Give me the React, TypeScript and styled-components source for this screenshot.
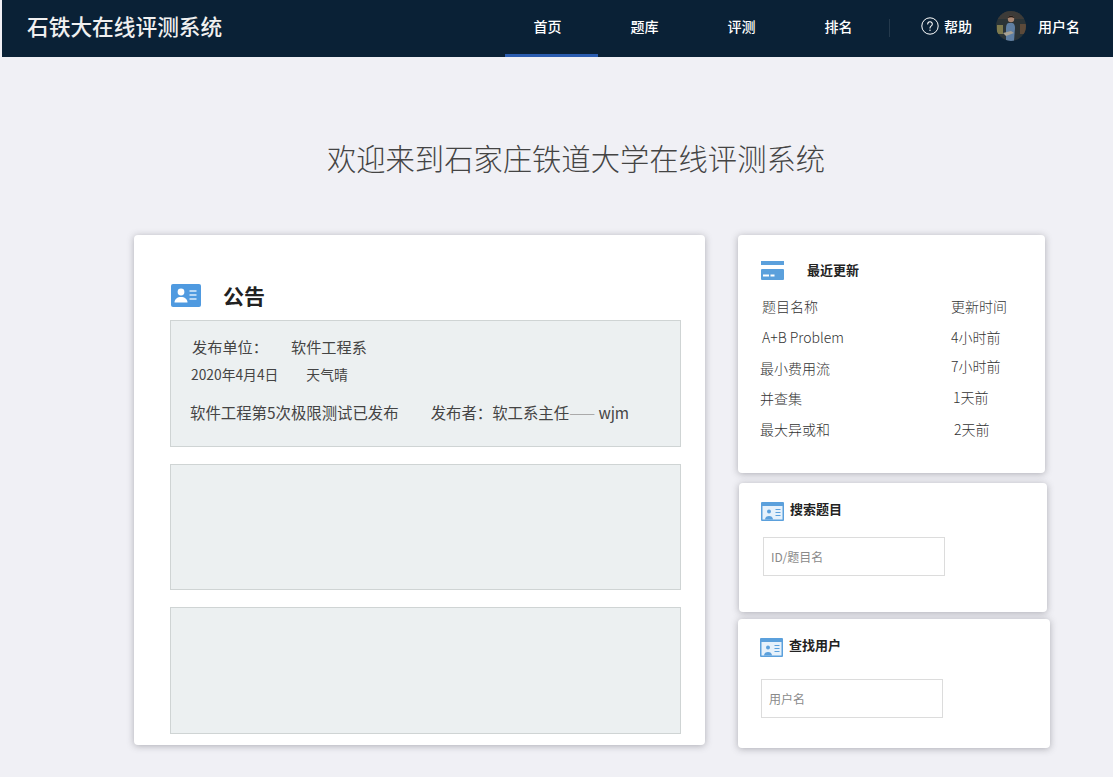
import * as React from 'react'
import styled, { createGlobalStyle } from 'styled-components'

const GlobalStyle = createGlobalStyle`
  html, body {
    margin: 0;
    padding: 0;
    background: #f0f0f5;
    font-family: 'Noto Sans CJK SC', 'Noto Sans', sans-serif;
    color: #333;
  }
  * {
    box-sizing: border-box;
  }
`

const Page = styled.div`
  width: 1113px;
  height: 777px;
  overflow: hidden;
`

// header
const Header = styled.header`
  display: flex;
  align-items: center;
  height: 57px;
  margin-left: 2px;
  background: #0a2136;
  color: #fff;
  white-space: nowrap;
  & > * {
    flex-shrink: 0;
  }
`

const Brand = styled.div`
  width: 496px;
  padding-left: 25px;
  font-size: 21.7px;
  line-height: 52px;
  height: 57px;
  font-weight: 500;
  color: #f0f0f0;
`

const NavList = styled.nav`
  display: flex;
  gap: 4px;
  margin-left: 7px;
`

const NavItem = styled.a<{ $active?: boolean }>`
  width: 93px;
  height: 57px;
  padding-right: 8px;
  line-height: 52px;
  text-align: center;
  font-size: 14px;
  font-weight: 500;
  color: #fff;
  border-bottom: 3px solid ${({ $active }) => ($active ? '#2a5cb0' : 'transparent')};
`

const Divider = styled.span`
  width: 1px;
  height: 18px;
  margin-bottom: 2px;
  background: #24394c;
`

const HelpLink = styled.a`
  display: flex;
  align-items: center;
  gap: 5px;
  margin: 0 0 5px 31px;
  font-size: 14px;
  font-weight: 500;
  color: #fff;
`

const UserLink = styled.a`
  display: flex;
  align-items: center;
  gap: 12px;
  margin: 0 0 5px 24px;
  font-size: 14px;
  font-weight: 500;
  color: #fff;
`

const Avatar = styled.svg`
  width: 30px;
  height: 30px;
  display: block;
`

// welcome
const Welcome = styled.h1`
  margin: 0;
  padding: 79px 0 0 39px;
  height: 178px;
  text-align: center;
  font-size: 29.3px;
  line-height: 43px;
  font-weight: 300;
  color: #444;
`

const Content = styled.main`
  display: flex;
  align-items: flex-start;
  padding-left: 134px;
`

const Card = styled.section`
  background: #fff;
  border-radius: 4px;
  box-shadow: 0 1px 7px rgba(80, 80, 90, 0.42);
`

const NoticeCard = styled(Card)`
  display: flex;
  flex-direction: column;
  width: 571px;
  height: 510px;
  padding: 45px 24px 11px 36px;
`

const NoticeTitle = styled.div`
  display: flex;
  align-items: center;
  gap: 22px;
  height: 30px;
  margin: 0 0 10px 1px;
  font-size: 21px;
  font-weight: 700;
  color: #222;
`

const NoticeBox = styled.div`
  height: 127px;
  margin-bottom: 17px;
  background: #ecf0f1;
  border: 1px solid #cfd4d4;
  color: #444;
  &:last-child {
    margin-bottom: 0;
  }
`

const NoticeLine = styled.div<{ $top: number; $left: number; $size: number }>`
  display: flex;
  margin: ${({ $top }) => $top}px 0 0 ${({ $left }) => $left}px;
  font-size: ${({ $size }) => $size}px;
  line-height: 20px;
  white-space: nowrap;
`

const Gap = styled.span<{ $width: number }>`
  display: inline-block;
  width: ${({ $width }) => $width}px;
`

const Publisher = styled.span`
  font-size: 15.4px;
`

const Dash = styled.span`
  color: #aaa;
  letter-spacing: 2.500px;
  margin-right: 1px;
`

const SideColumn = styled.div`
  display: flex;
  flex-direction: column;
  margin-left: 33px;
`

const UpdateCard = styled(Card)`
  width: 307px;
  height: 238px;
  padding: 24px 0 0 23px;
`

const SideHead = styled.div<{ $gap: number }>`
  display: flex;
  align-items: center;
  gap: ${({ $gap }) => $gap}px;
  height: 22px;
  font-size: 13px;
  font-weight: 700;
  color: #222;
`

const SideTitle = styled.span`
  margin-bottom: 2px;
`

const UpdateRows = styled.div`
  margin: 10px 0 0 -1px;
  font-size: 14px;
  font-weight: 300;
  color: #333;
`

const UpdateRow = styled.div`
  display: flex;
  height: 30.75px;
  line-height: 31px;
`

const NameCell = styled.span<{ $left: number }>`
  width: 191px;
  padding-left: ${({ $left }) => $left}px;
  white-space: nowrap;
`

const TimeCell = styled.span<{ $left: number; $top: number }>`
  padding-left: ${({ $left }) => $left}px;
  margin-top: ${({ $top }) => $top}px;
  white-space: nowrap;
`

const SearchCard = styled(Card)<{ $width: number; $height: number; $top: number; $left: number }>`
  width: ${({ $width }) => $width}px;
  height: ${({ $height }) => $height}px;
  margin-top: ${({ $top }) => $top}px;
  margin-left: ${({ $left }) => $left}px;
  padding: 15px 0 0 22px;
`

const SearchInput = styled.input<{ $width: number; $top: number; $left: number }>`
  display: block;
  width: ${({ $width }) => $width}px;
  height: 39px;
  margin-top: ${({ $top }) => $top}px;
  margin-left: ${({ $left }) => $left}px;
  padding: 0 7px;
  background: #fff;
  border: 1px solid #dcdcdc;
  outline: none;
  font-family: inherit;
  font-size: 12px;
  &::placeholder {
    color: #8a8a8a;
    opacity: 1;
  }
`

const ContactLineSvg = styled.svg`
  margin-top: 4px;
`

const HelpIcon = () => (
  <svg width="18" height="18" viewBox="0 0 18 18" fill="none">
    <circle cx="9" cy="9" r="8.200" stroke="#fff" strokeWidth="1" />
    <path d="M6.700 7a2.300 2.300 0 1 1 3.600 1.900c-.9.6-1.300 1-1.300 2.100" stroke="#fff" strokeWidth="1.100" strokeLinecap="round" />
    <circle cx="9" cy="13.300" r=".7" fill="#fff" />
  </svg>
)

const UserAvatar = () => (
  <Avatar viewBox="0 0 30 30">
    <defs>
      <clipPath id="avatar-clip">
        <circle cx="15" cy="15" r="15" />
      </clipPath>
    </defs>
    <g clipPath="url(#avatar-clip)">
      <rect width="30" height="30" fill="#2b3437" />
      <rect x="0" y="0" width="30" height="8" fill="#3d3b38" />
      <rect x="1" y="14" width="6" height="9" fill="#7d7a4e" />
      <rect x="24" y="13" width="6" height="10" fill="#5c4a3a" />
      <path d="M10 30V17c0-3 1-5 3-5h3c2 0 3 2 3 5l-1 13z" fill="#5f7fa3" />
      <circle cx="15" cy="8" r="3.200" fill="#a98672" />
      <path d="M11.800 7c.3-3 6-3 6.500 0-2-1-4.500-1-6.500 0z" fill="#221a16" />
      <path d="M7 22l8-2 3 2-8 3z" fill="#a8a294" />
    </g>
  </Avatar>
)

const ContactSolidIcon = () => (
  <svg width="30" height="23" viewBox="0 0 30 23">
    <rect width="30" height="23" rx="2" fill="#4f9ae0" />
    <circle cx="10" cy="8" r="3.400" fill="#fff" />
    <path d="M3.500 18.500c0-3.500 3-5.500 6.500-5.500s6.500 2 6.500 5.500z" fill="#fff" />
    <path d="M18.500 7h7M18.500 11h7M18.500 15h7" stroke="#dcecfa" strokeWidth="1.600" />
  </svg>
)

const BankCardIcon = () => (
  <svg width="23" height="19" viewBox="0 0 23 19">
    <rect y="0" width="23" height="4" fill="#5ba0dc" />
    <rect y="8" width="23" height="11" rx="1" fill="#5ba0dc" />
    <path d="M2 14.500h6M9.500 14.500h4" stroke="#fff" strokeWidth="2" />
  </svg>
)

const ContactLineIcon = () => (
  <ContactLineSvg width="23" height="19" viewBox="0 0 23 19">
    <rect width="23" height="19" rx="1" fill="#5ba0dc" />
    <rect x="1.500" y="4" width="20" height="13.500" fill="#e6f1fb" />
    <circle cx="8" cy="9.500" r="2" fill="#5ba0dc" />
    <path d="M4 17.500c0-2.500 2-3.500 4-3.500s4 1 4 3.500z" fill="#5ba0dc" />
    <path d="M14.500 7.500h5M14.500 10.500h5M14.500 13.500h5" stroke="#5ba0dc" strokeWidth="1" fill="none" />
  </ContactLineSvg>
)

const navigation = ['首页', '题库', '评测', '排名']

const updates = [
  { name: '题目名称', time: '更新时间', nameLeft: 2, timeLeft: 0, timeTop: 0 },
  { name: 'A+B Problem', time: '4小时前', nameLeft: 2, timeLeft: 0, timeTop: 0 },
  { name: '最小费用流', time: '7小时前', nameLeft: 0, timeLeft: 0, timeTop: -2 },
  { name: '并查集', time: '1天前', nameLeft: 0, timeLeft: 2, timeTop: -1 },
  { name: '最大异或和', time: '2天前', nameLeft: 0, timeLeft: 3, timeTop: 0 },
]

export default function App() {
  return (
    <Page>
      <GlobalStyle />
      <Header>
        <Brand>石铁大在线评测系统</Brand>
        <NavList>
          {navigation.map((label, i) => (
            <NavItem key={label} $active={i === 0}>
              {label}
            </NavItem>
          ))}
        </NavList>
        <Divider />
        <HelpLink>
          <HelpIcon />
          帮助
        </HelpLink>
        <UserLink>
          <UserAvatar />
          用户名
        </UserLink>
      </Header>

      <Welcome>欢迎来到石家庄铁道大学在线评测系统</Welcome>

      <Content>
        <NoticeCard>
          <NoticeTitle>
            <ContactSolidIcon />
            公告
          </NoticeTitle>
          <NoticeBox>
            <NoticeLine $top={15} $left={21} $size={15.200}>
              发布单位：
              <Gap $width={23} />
              软件工程系
            </NoticeLine>
            <NoticeLine $top={8} $left={20} $size={13.800}>
              2020年4月4日
              <Gap $width={28} />
              天气晴
            </NoticeLine>
            <NoticeLine $top={18} $left={19} $size={15.400}>
              软件工程第5次极限测试已发布
              <Gap $width={32} />
              <Publisher>
                发布者：软工系主任<Dash>——</Dash>wjm
              </Publisher>
            </NoticeLine>
          </NoticeBox>
          <NoticeBox />
          <NoticeBox />
        </NoticeCard>

        <SideColumn>
          <UpdateCard>
            <SideHead $gap={23}>
              <BankCardIcon />
              <SideTitle>最近更新</SideTitle>
            </SideHead>
            <UpdateRows>
              {updates.map(row => (
                <UpdateRow key={row.name}>
                  <NameCell $left={row.nameLeft}>{row.name}</NameCell>
                  <TimeCell $left={row.timeLeft} $top={row.timeTop}>
                    {row.time}
                  </TimeCell>
                </UpdateRow>
              ))}
            </UpdateRows>
          </UpdateCard>

          <SearchCard $width={308} $height={129} $top={10} $left={1}>
            <SideHead $gap={6}>
              <ContactLineIcon />
              <SideTitle>搜索题目</SideTitle>
            </SideHead>
            <SearchInput $width={182} $top={17} $left={2} placeholder="ID/题目名" />
          </SearchCard>

          <SearchCard $width={312} $height={129} $top={7} $left={0}>
            <SideHead $gap={6}>
              <ContactLineIcon />
              <SideTitle>查找用户</SideTitle>
            </SideHead>
            <SearchInput $width={182} $top={23} $left={1} placeholder="用户名" />
          </SearchCard>
        </SideColumn>
      </Content>
    </Page>
  )
}
